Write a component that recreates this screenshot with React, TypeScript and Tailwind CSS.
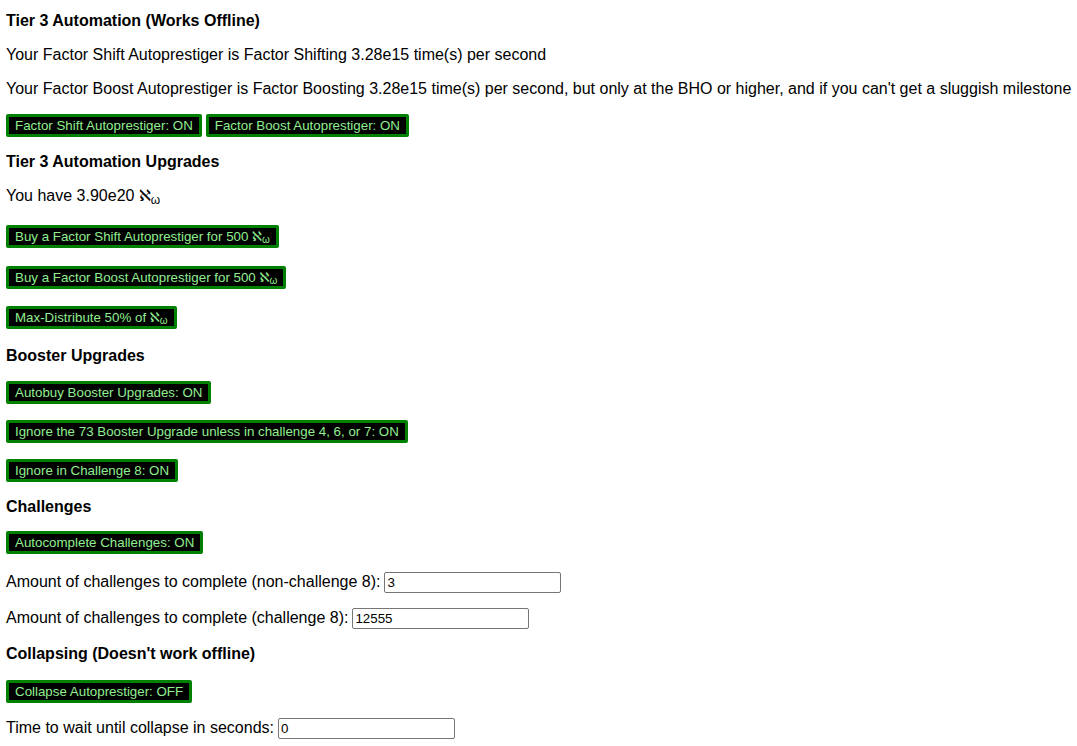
const btn =
  'h-[23px] bg-black border-[3px] border-[#008000] rounded-[2px] px-[6px] text-[13.33px] leading-[15px] text-[#90ee90] whitespace-nowrap'

const inp =
  'w-[177px] h-[21px] border border-[#767676] rounded-[2px] px-[2px] text-[13.33px] text-black bg-white'

function Aleph() {
  return (
    <>
      <span className="font-['DejaVu_Sans',sans-serif]">ℵ</span>
      <sub>ω</sub>
    </>
  )
}

export default function App() {
  return (
    <div className="min-h-screen bg-white text-black pl-[6px] pt-[12px] font-['Liberation_Sans',Arial,sans-serif] text-[16px] leading-[18px]">
      <div className="flex flex-col items-start">
        <h3 className="font-bold">Tier 3 Automation (Works Offline)</h3>
        <p className="mt-[16px]">Your Factor Shift Autoprestiger is Factor Shifting 3.28e15 time(s) per second</p>
        <p className="mt-[16px] whitespace-nowrap">
          Your Factor Boost Autoprestiger is Factor Boosting 3.28e15 time(s) per second, but only at the BHO or higher, and if you can't get a sluggish milestone
        </p>
        <div className="mt-[16px] flex gap-[4px]">
          <button className={btn}>Factor Shift Autoprestiger: ON</button>
          <button className={btn}>Factor Boost Autoprestiger: ON</button>
        </div>

        <h3 className="mt-[16px] font-bold">Tier 3 Automation Upgrades</h3>
        <p className="mt-[16px]">
          You have 3.90e20 <Aleph />
        </p>
        <button className={`${btn} mt-[20px]`}>
          Buy a Factor Shift Autoprestiger for 500 <Aleph />
        </button>
        <button className={`${btn} mt-[18px]`}>
          Buy a Factor Boost Autoprestiger for 500 <Aleph />
        </button>
        <button className={`${btn} mt-[17px]`}>
          Max-Distribute 50% of <Aleph />
        </button>

        <h3 className="mt-[18px] font-bold">Booster Upgrades</h3>
        <button className={`${btn} mt-[16px]`}>Autobuy Booster Upgrades: ON</button>
        <button className={`${btn} mt-[16px]`}>Ignore the 73 Booster Upgrade unless in challenge 4, 6, or 7: ON</button>
        <button className={`${btn} mt-[16px]`}>Ignore in Challenge 8: ON</button>

        <h3 className="mt-[16px] font-bold">Challenges</h3>
        <button className={`${btn} mt-[15px]`}>Autocomplete Challenges: ON</button>
        <div className="mt-[19px] h-[18px] flex items-center gap-[4px]">
          <span>Amount of challenges to complete (non-challenge 8):</span>
          <input className={inp} defaultValue="3" />
        </div>
        <div className="mt-[18px] h-[18px] flex items-center gap-[4px]">
          <span>Amount of challenges to complete (challenge 8):</span>
          <input className={inp} defaultValue="12555" />
        </div>

        <h3 className="mt-[18px] font-bold">Collapsing (Doesn't work offline)</h3>
        <button className={`${btn} mt-[17px]`}>Collapse Autoprestiger: OFF</button>
        <div className="mt-[16px] h-[18px] flex items-center gap-[4px]">
          <span>Time to wait until collapse in seconds:</span>
          <input className={inp} defaultValue="0" />
        </div>
      </div>
    </div>
  )
}
